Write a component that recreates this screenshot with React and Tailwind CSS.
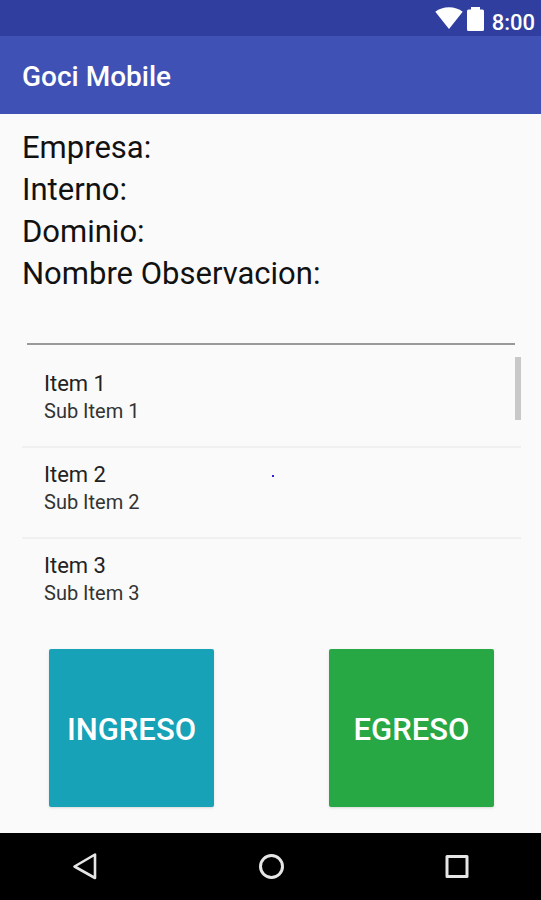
const items = [
  { title: "Item 1", subtitle: "Sub Item 1" },
  { title: "Item 2", subtitle: "Sub Item 2" },
  { title: "Item 3", subtitle: "Sub Item 3" },
];

function StatusBar() {
  return (
    <div className="flex h-9 items-end justify-end bg-[#303f9f] pr-1.5 text-white">
      <svg className="mb-[7px] h-[22px] w-7" viewBox="0 0 28 22" fill="currentColor" aria-hidden="true">
        <path d="M14 22 0.3 4.800C4 1.900 8.800 0.300 14 0.300s10 1.600 13.700 4.500Z" />
      </svg>
      <svg className="mr-2 mb-[5px] ml-1 h-6 w-[17px]" viewBox="0 0 17 24" fill="currentColor" aria-hidden="true">
        <path d="M4 0h9v2.500h2.500A1.500 1.500 0 0 1 17 4v18.500a1.500 1.500 0 0 1-1.500 1.500h-14A1.500 1.500 0 0 1 0 22.500V4a1.500 1.500 0 0 1 1.500-1.500h2.500Z" />
      </svg>
      <span className="text-[22px] leading-[26px] font-medium">8:00</span>
    </div>
  );
}

function NavBar() {
  return (
    <nav className="flex h-[67px] items-center justify-between bg-black px-[70px] text-[#e6e6e6]">
      <button type="button" aria-label="Back">
        <svg className="size-[30px]" viewBox="0 0 30 30" fill="none" stroke="currentColor" strokeWidth="2.600" strokeLinejoin="round">
          <path d="M25 2.500v23.500L4.500 14.500Z" />
        </svg>
      </button>
      <button type="button" aria-label="Home">
        <svg className="size-[30px]" viewBox="0 0 30 30" fill="none" stroke="currentColor" strokeWidth="3">
          <circle cx="15.500" cy="14.500" r="11" />
        </svg>
      </button>
      <button type="button" aria-label="Overview">
        <svg className="size-[30px]" viewBox="0 0 30 30" fill="none" stroke="currentColor" strokeWidth="3" strokeLinejoin="round">
          <rect x="6" y="4.500" width="20" height="20" />
        </svg>
      </button>
    </nav>
  );
}

export default function App() {
  return (
    <div className="flex min-h-screen flex-col bg-[#fafafa] font-[Roboto,sans-serif]">
      <StatusBar />
      <header className="flex h-[78px] items-center bg-[#3f51b5] px-[22px] pt-1">
        <h1 className="text-[28px] leading-8 font-medium text-white">Goci Mobile</h1>
      </header>

      <main className="flex grow flex-col pt-[13px]">
        <div className="flex flex-col px-[22px] text-[31px] leading-[42px] text-[#111]">
          <p>Empresa:</p>
          <p>Interno:</p>
          <p>Dominio:</p>
          <label htmlFor="observacion">Nombre Observacion:</label>
        </div>
        <input
          id="observacion"
          type="text"
          className="mr-[26px] ml-[27px] h-[50px] border-b-2 border-[#999] bg-transparent px-1 text-[22px] outline-none"
        />

        <div className="relative mt-3 mr-5 ml-[22px]">
          <ul>
            {items.map((item) => (
              <li
                key={item.title}
                className="flex h-[91px] flex-col border-b-2 border-[#f0f0f0] px-[22px] pt-[13px] last:border-b-0"
              >
                <span className="text-[22px] leading-7 text-[#222]">{item.title}</span>
                <span className="text-[20px] leading-[26px] text-[#333]">{item.subtitle}</span>
              </li>
            ))}
          </ul>
          <div className="absolute top-0 right-0 h-[63px] w-[6px] bg-[#c8c8c8]" />
          <div className="absolute top-[118px] left-1/2 size-[2px] bg-[#3020d8]" />
        </div>

        <div className="mt-auto flex justify-between pr-[47px] pb-[26px] pl-[49px] text-[31px] font-medium text-white">
          <button type="button" className="h-[158px] w-[165px] rounded-xs bg-[#17a2b8] pt-1 shadow-sm">
            INGRESO
          </button>
          <button type="button" className="h-[158px] w-[165px] rounded-xs bg-[#28a745] pt-1 shadow-sm">
            EGRESO
          </button>
        </div>
      </main>

      <NavBar />
    </div>
  );
}
